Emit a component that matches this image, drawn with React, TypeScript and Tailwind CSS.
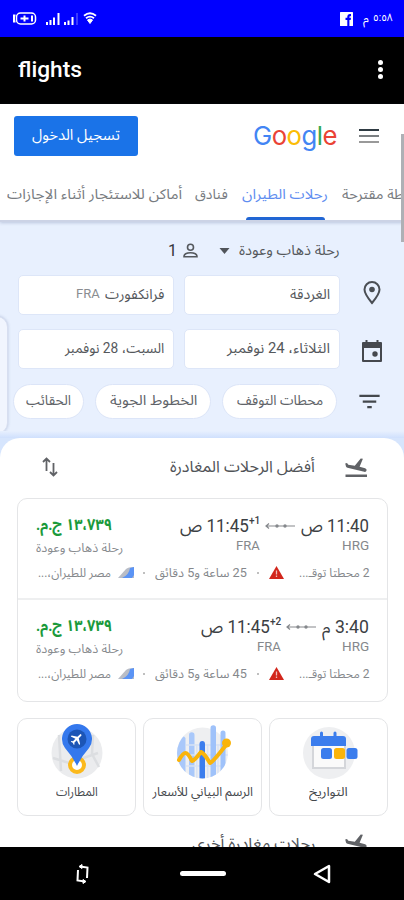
import { useLayoutEffect, useRef, useState, type ReactNode } from "react";
import { MdFilterList } from "react-icons/md";

const AR = "font-['Roboto','Noto_Sans_Arabic','DejaVu_Sans',sans-serif]";

/** Single-line label condensed or widened to occupy exactly `w` pixels. */
function Fit({ w, className = "", rtl = true, children }: { w: number; className?: string; rtl?: boolean; children: ReactNode }) {
  const ref = useRef<HTMLSpanElement>(null);
  const [scale, setScale] = useState(1);
  useLayoutEffect(() => {
    if (ref.current) setScale(w / ref.current.offsetWidth);
  }, [w]);
  return (
    <span dir="ltr" className={`block shrink-0 whitespace-nowrap ${className}`} style={{ width: w }}>
      <span ref={ref} dir={rtl ? "rtl" : "ltr"} className="inline-block origin-left" style={{ transform: `scaleX(${scale})` }}>
        {children}
      </span>
    </span>
  );
}

function Signal() {
  return (
    <svg width="15" height="12" viewBox="0 0 15 12" fill="#fff">
      <rect x="0" y="9" width="2" height="3" />
      <rect x="3.5" y="7" width="2" height="5" />
      <rect x="7" y="4.5" width="2" height="7.5" />
      <rect x="11.5" y="0" width="2" height="12" />
    </svg>
  );
}

function StatusBar() {
  return (
    <div dir="ltr" className="flex h-[37px] shrink-0 items-center bg-[#0000ff] pl-3 pr-[11px] text-white">
      <svg width="25" height="13" viewBox="0 0 25 13" fill="none" stroke="#fff">
        <path d="M3.500 3.500H2v6h1.500" strokeWidth="2" />
        <rect x="4.500" y="1" width="19" height="11" rx="4" strokeWidth="1.500" />
        <path d="M8.500 6.500h8M12.500 3.500v6M20 3.500v6" strokeWidth="2" />
      </svg>
      <div className="ml-[9px]"><Signal /></div>
      <svg className="ml-[3px]" width="14" height="12" viewBox="0 0 14 12" fill="#fff">
        <rect x="0" y="9" width="2" height="3" />
        <rect x="3.500" y="7.500" width="2" height="4.500" />
        <rect x="7.500" y="4" width="2" height="8" />
        <rect x="12.500" y="0" width="1" height="12" opacity=".45" />
      </svg>
      <svg className="ml-[5px]" width="14" height="13" viewBox="0 0 14 13" fill="none" stroke="#fff">
        <path d="M1 3.800Q7-1.200 13 3.800M3 6.300Q7 3 11 6.300" strokeWidth="1.800" />
        <path d="M4.500 8Q7 6 9.500 8L7 11.500Z" fill="#fff" />
      </svg>
      <svg className="ml-auto" width="13" height="14" viewBox="0 0 13 14">
        <rect width="13" height="14" rx=".5" fill="#fff" />
        <path d="M7.300 14V8H5.500V5.800h1.800V4.500Q7.300 2 9.700 2H11v2.200H10q-.6 0-.6.700v.9H11L10.700 8H9.400v6Z" fill="#00f" />
      </svg>
      <Fit w={6} className={`ml-[10px] text-[12px] ${AR}`}>م</Fit>
      <Fit w={20} className={`ml-[4px] text-[11px] ${AR}`}>٥:٥٨</Fit>
    </div>
  );
}

function AppBar() {
  return (
    <div dir="ltr" className="flex h-[67px] shrink-0 items-center justify-between bg-black pb-[3px] pl-[18px] pr-[21px] text-white">
      <Fit w={64} rtl={false} className="font-['Roboto',sans-serif] text-[22px] font-medium">flights</Fit>
      <div className="flex flex-col gap-[2px]">
        <i className="size-[5px] rounded-full bg-white" />
        <i className="size-[5px] rounded-full bg-white" />
        <i className="size-[5px] rounded-full bg-white" />
      </div>
    </div>
  );
}

function Header() {
  return (
    <header dir="ltr" className="relative z-10 h-[118px] shrink-0 border-b-2 border-[#ccd3e6] bg-white shadow-[0_1px_3px_rgba(60,80,130,0.25)]">
      <div className="flex h-[63px] items-center pl-[14px] pr-[25px]">
        <div className="flex h-10 w-[124px] items-center justify-center rounded-[3px] bg-[#1a73e8] text-white">
          <Fit w={88} className={`text-[15px] ${AR}`}>تسجيل الدخول</Fit>
        </div>
        <Fit w={84} rtl={false} className="ml-[115px] font-['Inter',sans-serif] text-[26px] leading-[34px] tracking-[-0.5px]">
          <span className="text-[#4285f4]">G</span>
          <span className="text-[#ea4335]">o</span>
          <span className="text-[#fbbc05]">o</span>
          <span className="text-[#4285f4]">g</span>
          <span className="text-[#34a853]">l</span>
          <span className="text-[#ea4335]">e</span>
        </Fit>
        <div className="ml-auto flex flex-col gap-[4px]">
          <i className="h-[2px] w-5 bg-[#2f3b43]" />
          <i className="h-[2px] w-5 bg-[#7b7f82]" />
          <i className="h-[2px] w-5 bg-[#999]" />
        </div>
      </div>
      <nav className={`flex h-[53px] overflow-hidden pl-[7px] pt-[13px] text-[14px] leading-[28px] text-[#777b80] ${AR}`}>
        <Fit w={175}>أماكن للاستئجار أثناء الإجازات</Fit>
        <Fit w={33} className="ml-[13px]">فنادق</Fit>
        <div className="ml-[14px] flex h-[40px] w-[86px] shrink-0 flex-col items-center justify-between text-[#5f8df0]">
          <Fit w={86}>رحلات الطيران</Fit>
          <i className="h-[3px] w-[79px] shrink-0 rounded-t bg-[#2166d4]" />
        </div>
        <Fit w={62} className="ml-[14px]">طة مقترحة</Fit>
      </nav>
    </header>
  );
}

function Field({ children }: { children: ReactNode }) {
  return (
    <div className="flex h-[40px] w-[156px] items-center rounded-[5px] border border-[#dde6f8] bg-white pb-[2px] pr-[9px] text-[14px] text-[#55585c]">
      {children}
    </div>
  );
}

function Chip({ width, text, tw }: { width: string; text: string; tw: number }) {
  return (
    <div className={`flex h-[35px] items-center justify-center rounded-full border border-[#dce5f8] bg-white pb-[2px] text-[14px] text-[#606368] ${width}`}>
      <Fit w={tw}>{text}</Fit>
    </div>
  );
}

function Search() {
  return (
    <section className={`relative h-[216px] shrink-0 bg-[#e8f0fe] text-[#55585c] ${AR}`}>
      <div className="flex h-[53px] items-center pr-[64px] pt-[4px]">
        <Fit w={101} className="text-[14px]">رحلة ذهاب وعودة</Fit>
        <svg className="mr-[9px]" width="11" height="6" viewBox="0 0 11 6"><path d="M.5 0h10L5.500 6Z" fill="#50545a" /></svg>
        <svg className="mr-[21px]" width="15" height="15" viewBox="0 0 15 15" fill="none" stroke="#55595e" strokeWidth="1.600">
          <circle cx="7.500" cy="4.200" r="3" />
          <path d="M1 13.700q0-4 6.500-4t6.500 4Z" />
        </svg>
        <span className="mr-[6px] text-[16px] text-[#33363a]">1</span>
      </div>
      <div className="flex items-center pr-[22px]">
        <svg className="mb-[5px]" width="20" height="25" viewBox="0 0 20 25" fill="none" stroke="#4a4e54" strokeWidth="2">
          <path d="M10 23Q2.500 14 2.500 9.500a7.500 7.500 0 0 1 15 0Q17.500 14 10 23Z" />
          <circle cx="10" cy="9.500" r="2.800" fill="#4a4e54" stroke="none" />
        </svg>
        <div className="mr-[22px] flex gap-[10px]">
          <Field><Fit w={40}>الغردقة</Fit></Field>
          <Field>
            <Fit w={59}>فرانكفورت</Fit>
            <Fit w={24} rtl={false} className="mr-[5px] text-[13px] text-[#8a8d91]">FRA</Fit>
          </Field>
        </div>
      </div>
      <div className="mt-[14px] flex items-center pr-[21px]">
        <svg className="mt-[4px]" width="22" height="24" viewBox="0 0 22 24">
          <path d="M2 4h18v18H2z" fill="none" stroke="#45484e" strokeWidth="2" strokeLinejoin="round" />
          <path d="M1.500 4h19v5h-19zM4.500 1h2v4h-2zM15.500 1h2v4h-2z" fill="#45484e" />
          <circle cx="14" cy="15" r="2.700" fill="#45484e" />
        </svg>
        <div className="mr-[21px] flex gap-[10px]">
          <Field><Fit w={103}>الثلاثاء، 24 نوفمبر</Fit></Field>
          <Field><Fit w={99}>السبت، 28 نوفمبر</Fit></Field>
        </div>
      </div>
      <div className="mt-[15px] flex items-center pr-[22px]">
        <MdFilterList size={27} className="-mr-[1px] text-[#44484d]" />
        <div className="mr-[19px] flex gap-[11px]">
          <Chip width="w-[115px]" text="محطات التوقف" tw={86} />
          <Chip width="w-[116px]" text="الخطوط الجوية" tw={87} />
          <Chip width="w-[71px]" text="الحقائب" tw={45} />
        </div>
      </div>
      <div className="absolute left-[-14px] top-[94px] h-[118px] w-[22px] rounded-[12px] border border-[#d7def0] bg-[#f1f5fe] shadow-[0_0_3px_rgba(80,100,150,0.3)]" />
    </section>
  );
}

function Flight({ depart, dw, arrive, plus, duration }: { depart: string; dw: number; arrive: string; plus: string; duration: string }) {
  return (
    <div className="h-[101px] px-[18px] pt-[14px]">
      <div className="flex h-[44px]">
        <div>
          <Fit w={dw} className="text-[18px] leading-[26px] text-[#3c4043]">{depart}</Fit>
          <Fit w={27} rtl={false} className="text-[13px] leading-[14px] text-[#85888c]">HRG</Fit>
        </div>
        <svg className="mr-[5px] mt-[9px]" width="31" height="8" viewBox="0 0 31 8" fill="none" stroke="#85888c" strokeWidth="1.200">
          <path d="M1 4h29M4 1.500 1 4l3 2.500" />
          <g fill="#85888c" stroke="none"><circle cx="12" cy="4" r="1.700" /><circle cx="20" cy="4" r="1.700" /></g>
        </svg>
        <div className="mr-[5px]">
          <div className="flex h-[26px]">
            <Fit w={11} rtl={false} className="text-[11px] font-medium leading-[16px] text-[#3c4043]">{plus}</Fit>
            <Fit w={69} className="text-[18px] leading-[26px] text-[#3c4043]">{arrive}</Fit>
          </div>
          <Fit w={24} rtl={false} className="text-[13px] leading-[14px] text-[#85888c]">FRA</Fit>
        </div>
        <div className="mr-auto flex flex-col items-end">
          <Fit w={76} className="text-[16px] font-bold leading-[24px] text-[#1b9a3b]">١٣،٧٣٩ ج.م.</Fit>
          <Fit w={87} className="text-[12px] leading-[22px] text-[#888b8f]">رحلة ذهاب وعودة</Fit>
        </div>
      </div>
      <div className="flex h-[31px] items-center text-[12px] text-[#85888c]">
        <Fit w={70}>2 محطتا توقـ...</Fit>
        <svg className="mr-[15px]" width="15" height="13" viewBox="0 0 15 13">
          <path d="M7.500 0 15 13H0Z" fill="#d2261c" />
          <path d="M7.500 4.500v4M7.500 9.500v1.500" stroke="#fff" strokeWidth="1.300" opacity=".7" />
        </svg>
        <i className="mr-[10px] size-[2px] rounded-full bg-[#aaa]" />
        <Fit w={92} className="mr-[10px]">{duration}</Fit>
        <i className="mr-[10px] size-[2px] rounded-full bg-[#aaa]" />
        <svg className="mr-[9px]" width="16" height="11" viewBox="0 0 16 11">
          <path d="M0 11 8 2Q10 0 16 0V11Z" fill="#b9bdc6" />
          <path d="M4 11Q11 8 12 1L16 0V8L14 11Z" fill="#5b94f5" />
        </svg>
        <Fit w={73} className="mr-[7px]">مصر للطيران،...</Fit>
      </div>
    </div>
  );
}

function Tool({ label, w, children }: { label: string; w: number; children: ReactNode }) {
  return (
    <div className="flex h-[98px] w-[119px] flex-col items-center rounded-[10px] border-[1.5px] border-[#e4e5e7] pt-[3px]">
      <svg width="66" height="60" viewBox="0 0 66 60">{children}</svg>
      <Fit w={w} className="text-[12.5px] leading-[20px] text-[#45484c]">{label}</Fit>
    </div>
  );
}

function DatesArt() {
  return (
    <>
      <circle cx="33" cy="31" r="26" fill="#eeeff1" />
      <path d="M16 22h34v25H16z" fill="#d4d6da" />
      <path d="M18 22h30v23H18z" fill="#fafafa" />
      <path d="M15 24v-7q0-3 3-3h29q3 0 3 3v7Z" fill="#3b7ded" />
      <path d="M25.500 11v5M39 11v5" stroke="#3b7ded" strokeWidth="3" strokeLinecap="round" />
      <rect x="25" y="26" width="11" height="11" rx="2.500" fill="#3b7ded" />
      <rect x="38" y="26" width="11" height="11" rx="2.500" fill="#fbb40a" />
      <rect x="50.500" y="26" width="11" height="11" rx="2.500" fill="#3b7ded" />
    </>
  );
}

function ChartArt() {
  return (
    <>
      <clipPath id="disc"><path d="M36 0H66V31H58A25.500 25.500 0 0 1 7 31A25.500 25.500 0 0 1 36 6Z" /></clipPath>
      <circle cx="32.500" cy="31" r="25.500" fill="#eeeff1" />
      <g clipPath="url(#disc)">
        <path d="M7 16q6-4 8.500 0v40H7zM19 13a2.750 2.750 0 0 1 5.500 0v47H19z" fill="#a9c8fa" />
        <path d="M16 23h42M16 33h42M16 44h42M26.800 22v38M37.700 22v38M48 22v35" stroke="#d8e2f3" strokeWidth="1.500" />
        <path d="M29.500 22q0-3 2.750-3t2.750 3v38h-5.500z" fill="#3b7ded" />
        <path d="M40.500 6a2.750 2.750 0 0 1 5.500 0v54h-5.500zM50.500 11a2.500 2.500 0 0 1 5 0v45h-5z" fill="#9fc2fa" />
      </g>
      <path d="M9 38Q13 31 15.500 31T22 39Q25 38 31 30Q34 31 40 41Q43 40 56 23" fill="none" stroke="#f9b40b" strokeWidth="4" strokeLinejoin="round" strokeLinecap="round" />
      <circle cx="56.500" cy="21" r="4.500" fill="#f9b40b" />
    </>
  );
}

function AirportArt() {
  return (
    <>
      <circle cx="33" cy="31" r="25.500" fill="#ebecee" />
      <path d="M15 13 17 49M49 13 48 32 55 45M9 36 25 41 54 31" fill="none" stroke="#dcdee1" strokeWidth="2.500" />
      <circle cx="33" cy="43" r="7" fill="#fff" stroke="#fbb91c" strokeWidth="4" />
      <path d="M33 44Q29 35 21 26A15 15 0 1 1 45 26Q37 35 33 44Z" fill="#3478ed" />
      <circle cx="33" cy="17" r="9.500" fill="#1c55b6" />
      <g transform="translate(25.500 9.500) rotate(45 7.500 7.500) scale(.63)">
        <path d="M21 16v-2l-8-5V3.500a1.500 1.500 0 0 0-3 0V9l-8 5v2l8-2.500V19l-2 1.500V22l3.500-1 3.500 1v-1.500L13 19v-5.500Z" fill="#fff" />
      </g>
    </>
  );
}

function Landing() {
  return (
    <svg className="shrink-0" width="24" height="26" viewBox="0 0 24 26" fill="#606266">
      <path d="M1.200 8.500 3 8l1.300 1.800 6.500 1L16.700 3.500l2.200.3-3.300 8 5.500 1.500q2 .7 1.400 2.500-.5 1.400-2.300 1L3.500 12.700Q2.200 12.300 2 11.500Z" />
      <path d="M1.500 19.500h21.500V22H1.500z" />
    </svg>
  );
}

function Results() {
  return (
    <div className="min-h-0 flex-1 overflow-hidden bg-[#d6e5fd]">
      <main className={`h-full rounded-t-[20px] bg-white ${AR}`}>
        <div className="flex h-[60px] items-center pr-[36px]">
          <Landing />
          <Fit w={145} className="mr-[29px] pb-[3px] text-[16px] text-[#505357]">أفضل الرحلات المغادرة</Fit>
          <svg className="mb-[2px] ml-[42px] mr-auto" width="16" height="20" viewBox="0 0 16 20" fill="none" stroke="#606266" strokeWidth="1.800">
            <path d="M4.500 14V2M1 5 4.500 1.500 8 5M11.500 6v12M8 15l3.500 3.500L15 15" />
          </svg>
        </div>
        <div className="mr-[16px] w-[371px] divide-y-2 divide-[#eeeff0] rounded-[10px] border-[1.5px] border-[#e4e5e7]">
          <Flight depart="11:40 ص" dw={68} arrive="11:45 ص" plus="+1" duration="25 ساعة و5 دقائق" />
          <Flight depart="3:40 م" dw={47} arrive="11:45 ص" plus="+2" duration="45 ساعة و5 دقائق" />
        </div>
        <div className="mr-[16px] mt-[16px] flex gap-[7px]">
          <Tool label="التواريخ" w={39}><DatesArt /></Tool>
          <Tool label="الرسم البياني للأسعار" w={100}><ChartArt /></Tool>
          <Tool label="المطارات" w={42}><AirportArt /></Tool>
        </div>
        <div className="flex pr-[36px] pt-[15px]">
          <Landing />
          <Fit w={123} className="mr-[29px] text-[16px] leading-[26px] text-[#505357]">رحلات مغادرة أخرى</Fit>
        </div>
      </main>
    </div>
  );
}

function NavBar() {
  return (
    <div dir="ltr" className="flex h-[53px] shrink-0 items-center bg-black pl-[75px]">
      <svg width="15" height="20" viewBox="0 0 15 20" fill="none" stroke="#fff" strokeWidth="2">
        <path d="M5 2.500 12.500 3.500 12 14M10 17.500 2.500 16.500 3 6" />
        <path d="M7 .5v4L4 2.500ZM8 15.500v4l3-2Z" fill="#fff" strokeWidth="1" />
      </svg>
      <i className="ml-[90px] h-[5px] w-[46px] rounded-full bg-white" />
      <svg className="ml-[87px]" width="19" height="20" viewBox="0 0 19 20" fill="none" stroke="#fff" strokeWidth="2.500" strokeLinejoin="round">
        <path d="M2 10 16 2V18Z" />
      </svg>
    </div>
  );
}

export default function App() {
  return (
    <div dir="rtl" className="relative flex h-[900px] w-[404px] flex-col overflow-hidden bg-white">
      <StatusBar />
      <AppBar />
      <Header />
      <Search />
      <div aria-hidden className="relative -mt-[7px] h-[7px] shrink-0 bg-linear-to-b from-[#e8f0fe] to-[#cfe0fd]" />
      <Results />
      <NavBar />
      <div className="absolute right-0 top-[134px] z-20 h-[108px] w-[3px] bg-[#aeb0b5]" />
    </div>
  );
}
